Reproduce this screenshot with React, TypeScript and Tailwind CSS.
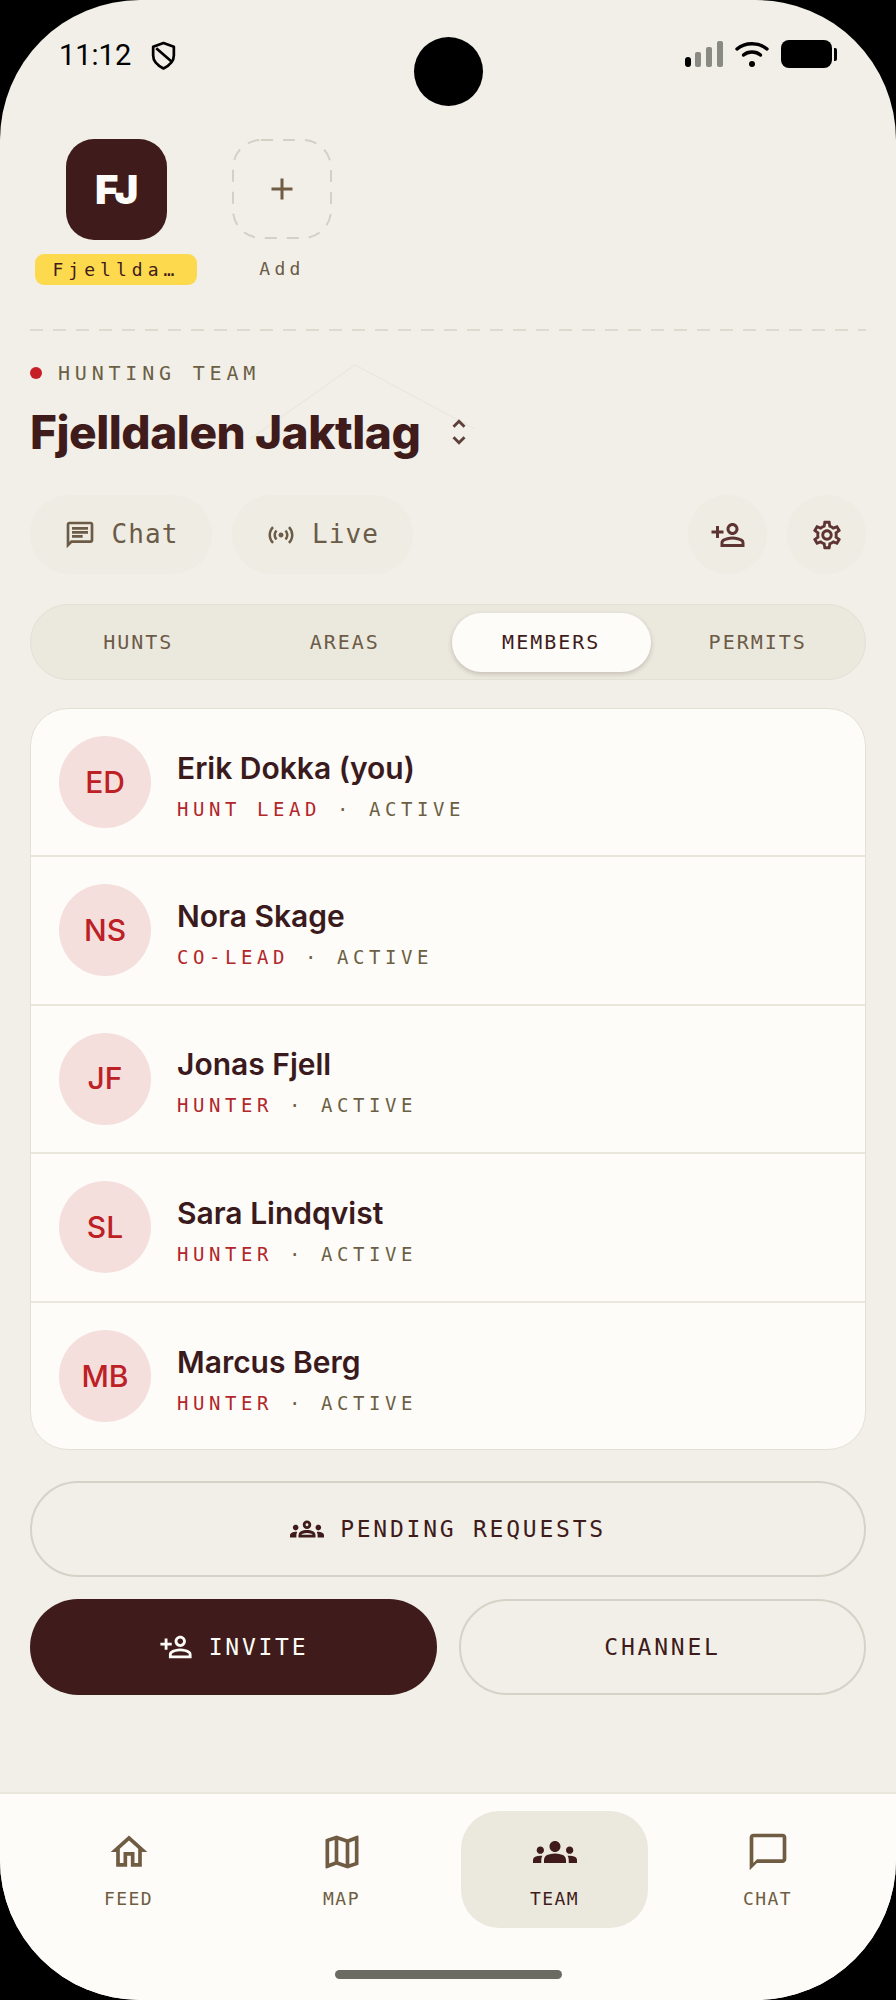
import {
  MdAdd,
  MdGroups,
  MdOutlineChat,
  MdOutlineChatBubbleOutline,
  MdOutlineGroups,
  MdOutlineHome,
  MdOutlineMap,
  MdOutlinePersonAddAlt,
  MdOutlineSensors,
  MdOutlineSettings,
  MdUnfoldMore,
} from "react-icons/md";

const mono = "font-['DejaVu_Sans_Mono',monospace]";

const members = [
  { initials: "ED", name: "Erik Dokka (you)", role: "HUNT LEAD" },
  { initials: "NS", name: "Nora Skage", role: "CO-LEAD" },
  { initials: "JF", name: "Jonas Fjell", role: "HUNTER" },
  { initials: "SL", name: "Sara Lindqvist", role: "HUNTER" },
  { initials: "MB", name: "Marcus Berg", role: "HUNTER" },
];

function StatusBar() {
  return (
    <div className="flex h-[139px] items-start justify-between pl-[59px] pr-[59px] pt-[37px] text-black">
      <div className="flex items-center gap-[20px]">
        <span className="font-['Roboto',sans-serif] text-[29px] leading-[36px]">11:12</span>
        <svg width="25" height="29" viewBox="0 0 24 28" fill="none" stroke="black" strokeWidth="2.6">
          <path d="M12 2 L22 5.5 V14 C22 20 17 24 12 26.5 C7 24 2 20 2 14 V5.5 Z" strokeLinejoin="round" />
          <path d="M5 7 L20 20" />
        </svg>
      </div>
      <div className="flex items-center gap-[12px] pt-[3px]">
        <svg width="38" height="26" viewBox="0 0 38 26">
          <rect x="0" y="16" width="6" height="10" rx="3" fill="#000" />
          <rect x="10" y="11" width="6" height="15" rx="2" fill="#8a8a84" />
          <rect x="21" y="6" width="6" height="20" rx="2" fill="#8a8a84" />
          <rect x="32" y="0" width="6" height="26" rx="2" fill="#8a8a84" />
        </svg>
        <svg width="34" height="26" viewBox="0 0 34 26" fill="none" stroke="black" strokeWidth="3.4" strokeLinecap="round">
          <path d="M2 8 C10 1 24 1 32 8" />
          <path d="M8.5 14 C13 10 21 10 25.5 14" />
          <circle cx="17" cy="23" r="3" fill="black" stroke="none" />
        </svg>
        <div className="flex items-center gap-[2px]">
          <div className="h-[28px] w-[51px] rounded-[8px] bg-black" />
          <div className="h-[13px] w-[3px] rounded-r-[2px] bg-black" />
        </div>
      </div>
    </div>
  );
}

function TeamRail() {
  return (
    <div className="flex items-start px-[35px]">
      <div className="flex w-[162px] flex-col items-center">
        <div className="flex h-[101px] w-[101px] items-center justify-center rounded-[28px] bg-[#3f1c1b]">
          <span className="font-['Inter',sans-serif] text-[40px] font-black tracking-[-0.03em] text-[#fdfcf8]">FJ</span>
        </div>
        <div
          className={`mt-[14px] flex h-[31px] w-[162px] items-center justify-center rounded-[9px] bg-[#fdd94d] text-[18px] tracking-[0.28em] text-[#3f1c1b] ${mono}`}
        >
          Fjellda…
        </div>
      </div>
      <div className="ml-[35px] flex w-[100px] flex-col items-center">
        <div className="relative flex h-[100px] w-[100px] items-center justify-center text-[#6f5c42]">
          <svg className="absolute inset-0" width="100" height="100" fill="none" stroke="#d4d0c5" strokeWidth="2">
            <rect x="1" y="1" width="98" height="98" rx="28" strokeDasharray="12 10" />
          </svg>
          <MdAdd size={36} />
        </div>
        <div className={`mt-[14px] text-[18px] leading-[31px] tracking-[0.24em] text-[#6b5b47] ${mono}`}>Add</div>
      </div>
    </div>
  );
}

function TeamHeading() {
  return (
    <div className="relative mx-[30px] mt-[44px] pt-[32px]">
      <div className="absolute inset-x-0 top-0 h-[2px] bg-[repeating-linear-gradient(90deg,#dedad0_0_13px,transparent_13px_23px)]" />
      <svg className="absolute left-[170px] top-[30px]" width="290" height="90" viewBox="0 0 290 90" fill="none" stroke="#eae7de" strokeWidth="1.2">
        <path d="M50 80 L155 6 L275 70" />
      </svg>
      <div className="relative flex items-center gap-[16px]">
        <div className="h-[12px] w-[12px] rounded-full bg-[#c62026]" />
        <span className={`text-[20px] leading-[24px] tracking-[0.24em] text-[#6b5f45] ${mono}`}>HUNTING TEAM</span>
      </div>
      <div className="relative mt-[19px] flex items-center">
        <h1 className="font-['Inter',sans-serif] text-[46px] font-extrabold leading-[56px] tracking-[-0.01em] text-[#3f1c1b]">
          Fjelldalen Jaktlag
        </h1>
        <MdUnfoldMore className="ml-[22px] text-[#5e3f3a]" size={34} />
      </div>
    </div>
  );
}

function Actions() {
  return (
    <div className="mx-[30px] mt-[35px] flex items-center gap-[20px]">
      <button className={`flex h-[79px] w-[182px] items-center justify-center gap-[16px] rounded-full bg-[#eeece3] text-[26px] tracking-[0.04em] text-[#6b5b47] ${mono}`}>
        <MdOutlineChat size={32} />
        Chat
      </button>
      <button className={`flex h-[79px] w-[181px] items-center justify-center gap-[16px] rounded-full bg-[#eeece3] text-[26px] tracking-[0.04em] text-[#6b5b47] ${mono}`}>
        <MdOutlineSensors size={30} />
        Live
      </button>
      <div className="ml-auto flex gap-[20px]">
        <button className="flex h-[79px] w-[79px] items-center justify-center rounded-full bg-[#eeece3] text-[#5e3433]">
          <MdOutlinePersonAddAlt className="-scale-x-100" size={36} />
        </button>
        <button className="flex h-[79px] w-[79px] items-center justify-center rounded-full bg-[#eeece3] text-[#5e3433]">
          <MdOutlineSettings size={34} />
        </button>
      </div>
    </div>
  );
}

function Tabs() {
  const tabs = ["HUNTS", "AREAS", "MEMBERS", "PERMITS"];
  return (
    <div className="mx-[30px] mt-[30px] grid h-[76px] grid-cols-4 items-center gap-[8px] rounded-[38px] border border-[#e3e0d5] bg-[#ebe8de] px-[8px]">
      {tabs.map((t) => (
        <div
          key={t}
          className={`flex h-[59px] items-center justify-center rounded-full text-[20px] tracking-[0.1em] ${mono} ${
            t === "MEMBERS" ? "bg-[#fdfcf8] text-[#3f1c1b] shadow-[0_2px_5px_rgba(60,40,30,0.22)]" : "text-[#6b5b47]"
          }`}
        >
          {t}
        </div>
      ))}
    </div>
  );
}

function MemberList() {
  return (
    <div className="mx-[30px] mt-[28px] overflow-hidden rounded-[38px] border border-[#e3e0d5] bg-[#fdfcf8]">
      {members.map((m, i) => (
        <div
          key={m.initials}
          className={`flex items-center gap-[26px] px-[28px] ${i > 0 ? "h-[148.6px] border-t-2 border-[#e9e6dc]" : "h-[146px]"}`}
        >
          <div className="flex h-[92px] w-[92px] shrink-0 items-center justify-center rounded-full bg-[#f4dfdd] font-['Inter',sans-serif] text-[30px] font-medium text-[#bd2025]">
            {m.initials}
          </div>
          <div className="pt-[7px]">
            <div className="font-['Inter',sans-serif] text-[30px] font-semibold leading-[36px] text-[#3a1a1c]">{m.name}</div>
            <div className={`mt-[10px] text-[19px] leading-[26px] tracking-[0.24em] text-[#6b5f45] ${mono}`}>
              <span className="text-[#b3262b]">{m.role}</span> · ACTIVE
            </div>
          </div>
        </div>
      ))}
    </div>
  );
}

function Buttons() {
  return (
    <div className={`mx-[30px] mt-[31px] flex flex-col gap-[22px] text-[23px] tracking-[0.12em] ${mono}`}>
      <button className="flex h-[96px] items-center justify-center gap-[16px] rounded-full border-2 border-[#d5d2c7] text-[#3f1c1b]">
        <MdOutlineGroups size={34} />
        PENDING REQUESTS
      </button>
      <div className="grid grid-cols-2 gap-[22px]">
        <button className="flex h-[96px] items-center justify-center gap-[16px] rounded-full bg-[#3f1c1b] text-[#fdfcf8]">
          <MdOutlinePersonAddAlt className="-scale-x-100" size={34} />
          INVITE
        </button>
        <button className="flex h-[96px] items-center justify-center rounded-full border-2 border-[#d5d2c7] text-[#3f1c1b]">
          CHANNEL
        </button>
      </div>
    </div>
  );
}

function BottomNav() {
  const items = [
    { label: "FEED", Icon: MdOutlineHome },
    { label: "MAP", Icon: MdOutlineMap },
    { label: "TEAM", Icon: MdGroups },
    { label: "CHAT", Icon: MdOutlineChatBubbleOutline },
  ];
  return (
    <div className="mt-auto h-[208px] border-t-2 border-[#e9e6dc] bg-[#fdfcf8] pt-[17px]">
      <div className="grid grid-cols-4 gap-[26px] px-[35px]">
        {items.map(({ label, Icon }) => (
          <div
            key={label}
            className={`flex h-[117px] flex-col items-center rounded-[38px] pt-[19px] text-[18px] tracking-[0.08em] ${mono} ${
              label === "TEAM" ? "bg-[#ebe8de] text-[#3f1c1b]" : "text-[#6f5c42]"
            }`}
          >
            <Icon size={44} />
            <span className="mt-[13px] leading-[24px]">{label}</span>
          </div>
        ))}
      </div>
    </div>
  );
}

export default function App() {
  return (
    <div className="relative h-[2000px] w-[896px] bg-black">
      <div className="flex h-full flex-col overflow-hidden rounded-[140px] bg-[#f1efe7]">
        <StatusBar />
        <TeamRail />
        <TeamHeading />
        <Actions />
        <Tabs />
        <MemberList />
        <Buttons />
        <BottomNav />
      </div>
      {/* camera cutout and home bar sit over the screen */}
      <div className="absolute left-[414px] top-[37px] h-[69px] w-[69px] rounded-full bg-black" />
      <div className="absolute left-[335px] top-[1970px] h-[9px] w-[227px] rounded-full bg-[#6b6b63]" />
    </div>
  );
}
